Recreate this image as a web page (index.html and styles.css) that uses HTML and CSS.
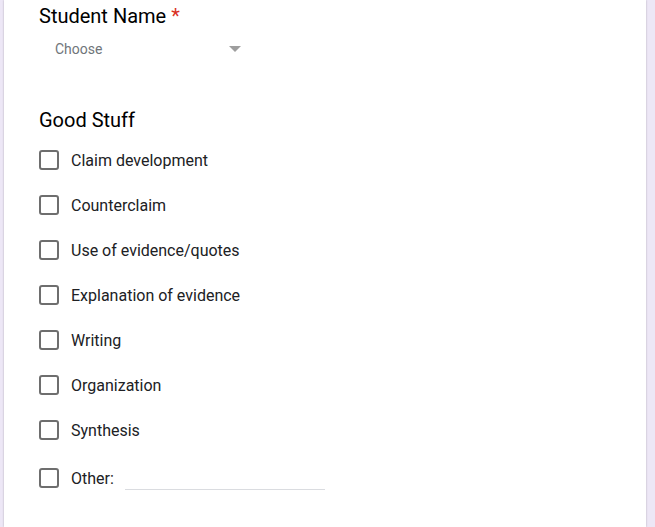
FILE: index.html
```html
<!DOCTYPE html>
<html lang="en">
<head>
  <meta charset="UTF-8" />
  <title>Feedback Form</title>
  <link rel="stylesheet" href="styles.css">
</head>
<body>
  <div class="card">
    <div class="question">
      <div class="q-title">Student Name <span class="req">*</span></div>
      <div class="select">
        <span class="select-text">Choose</span>
        <span class="select-arrow"></span>
      </div>
    </div>

    <div class="question good-stuff">
      <div class="q-title">Good Stuff</div>
      <div class="options">
        <label class="option"><span class="box"></span>Claim development</label>
        <label class="option"><span class="box"></span>Counterclaim</label>
        <label class="option"><span class="box"></span>Use of evidence/quotes</label>
        <label class="option"><span class="box"></span>Explanation of evidence</label>
        <label class="option"><span class="box"></span>Writing</label>
        <label class="option"><span class="box"></span>Organization</label>
        <label class="option"><span class="box"></span>Synthesis</label>
        <label class="option other"><span class="box"></span>Other:<span class="other-input"></span></label>
      </div>
    </div>
  </div>
</body>
</html>
```

FILE: styles.css
```css
body {
  margin: 0;
  height: 527px;
  overflow: hidden;
  background: #ede7f6;
  font-family: Roboto, Arial, sans-serif;
}

.card {
  margin: 0 9px 0 4px;
  height: 100%;
  background: #fff;
  box-shadow: 0 0 2px rgba(0, 0, 0, 0.25);
  padding: 0 35px;
  box-sizing: border-box;
  color: #202124;
}

.question {
  padding-top: 2px;
}

.q-title {
  font-size: 20px;
  line-height: 28px;
  color: #000;
}

.req {
  color: #d93025;
}

.select {
  display: flex;
  align-items: center;
  justify-content: space-between;
  width: 190px;
  margin: 5px 0 0 16px;
  height: 28px;
}

.select-text {
  font-size: 14px;
  color: #70757a;
}

.select-arrow {
  width: 0;
  height: 0;
  border-left: 6px solid transparent;
  border-right: 6px solid transparent;
  border-top: 6px solid #9e9e9e;
  margin-right: 4px;
}

.good-stuff {
  margin-top: 41px;
}

.options {
  display: flex;
  flex-direction: column;
  gap: 25px;
  margin-top: 16px;
}

.option {
  display: flex;
  align-items: center;
  height: 20px;
  font-size: 16px;
  color: #202124;
}

.box {
  width: 16px;
  height: 16px;
  border: 2px solid #6e6e6e;
  border-radius: 3px;
  margin-right: 12px;
  flex-shrink: 0;
}

.other {
  margin-top: 3px;
}

.other-input {
  width: 200px;
  height: 20px;
  margin-left: 11px;
  margin-top: 2px;
  border-bottom: 1px solid #dadce0;
}
```
